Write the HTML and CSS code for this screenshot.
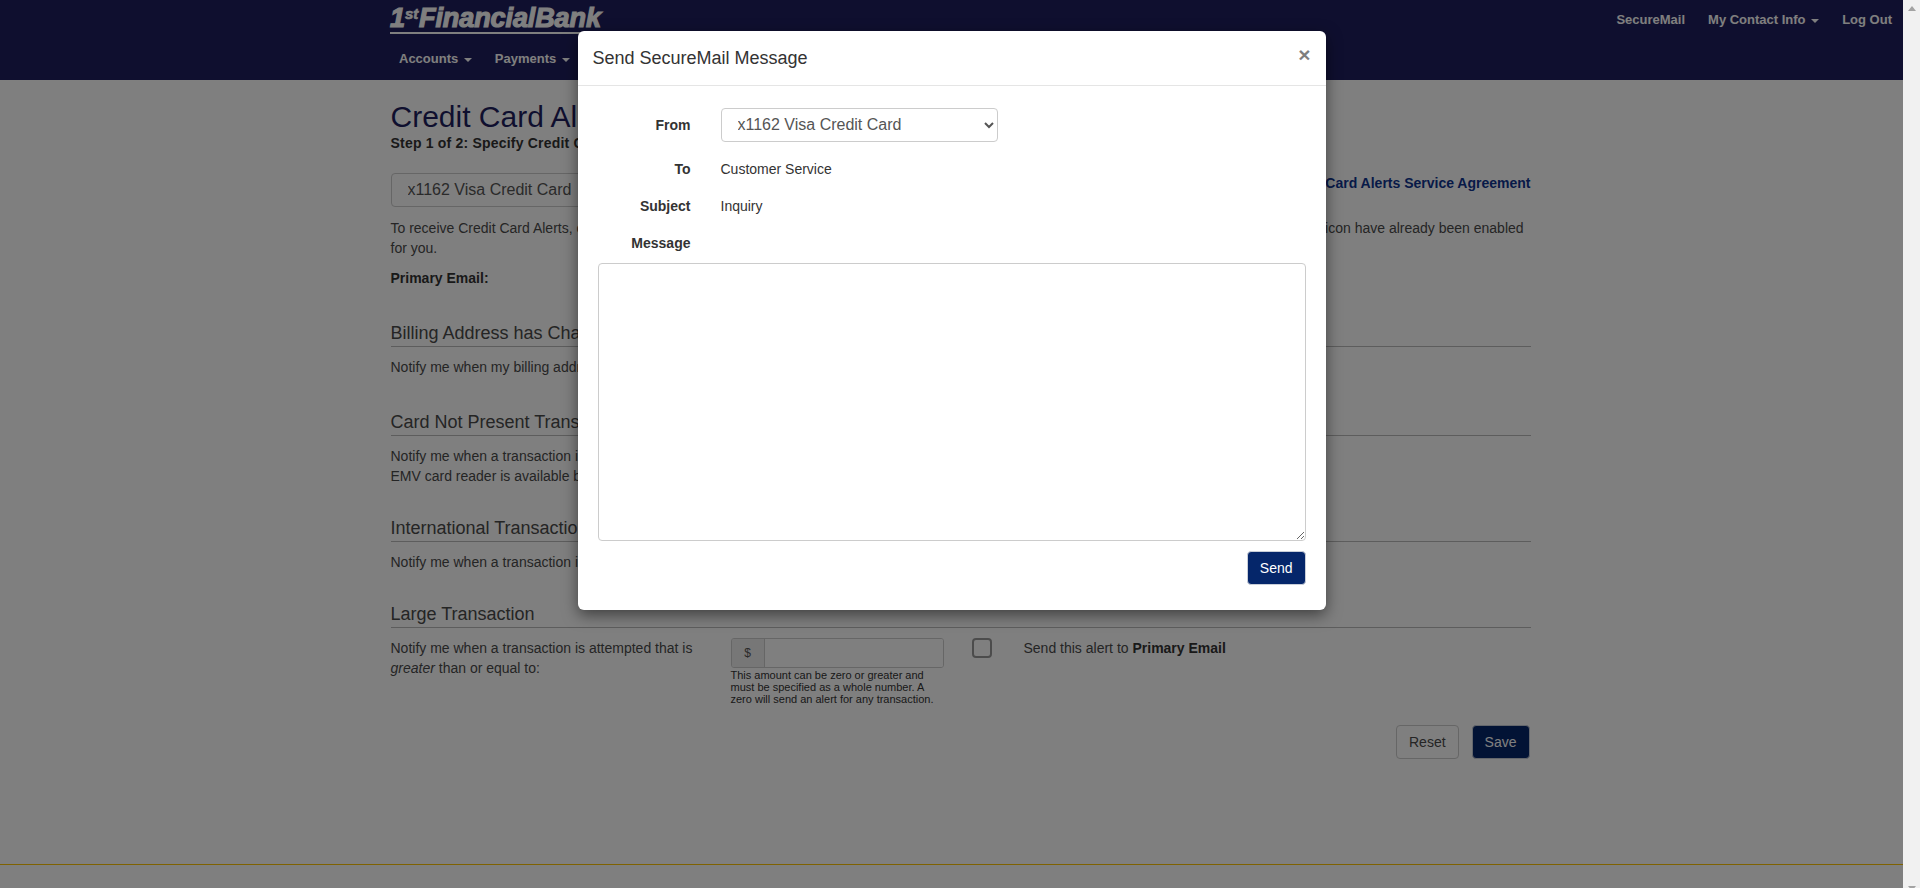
FILE: index.html
```html
<!DOCTYPE html>
<html lang="en">
<head>
<meta charset="utf-8">
<title>Credit Card Alerts</title>
<link rel="stylesheet" href="styles.css">
</head>
<body>
<div class="page">
  <header class="navbar">
    <div class="nav-top">
      <a class="logo">1<sup>st</sup>FinancialBank<small>USA</small></a>
      <ul class="nav-util">
        <li>SecureMail</li>
        <li>My Contact Info <span class="caret"></span></li>
        <li>Log Out</li>
      </ul>
    </div>
    <ul class="nav-main">
      <li>Accounts <span class="caret"></span></li>
      <li>Payments <span class="caret"></span></li>
    </ul>
  </header>

  <main class="content">
    <h1>Credit Card Alerts</h1>
    <p class="step">Step 1 of 2: Specify Credit Card Alert Settings</p>
    <div class="account-row">
      <select class="field account-select"><option>x1162 Visa Credit Card</option></select>
      <a class="agreement">Credit Card Alerts Service Agreement</a>
    </div>
    <p class="intro">To receive Credit Card Alerts, check the box next to each alert that you would like to receive and then click on the Save button. Alerts marked by a lock icon have already been enabled for you.</p>
    <p class="primary"><b>Primary Email:</b></p>

    <section class="section">
      <h3>Billing Address has Changed</h3>
      <div class="alert-row"><p>Notify me when my billing address has changed.</p></div>
    </section>
    <section class="section">
      <h3>Card Not Present Transaction</h3>
      <div class="alert-row"><p>Notify me when a transaction is attempted and an<br>EMV card reader is available but not used.</p></div>
    </section>
    <section class="section section-tight">
      <h3>International Transaction</h3>
      <div class="alert-row"><p>Notify me when a transaction is international.</p></div>
    </section>
    <section class="section section-tight">
      <h3>Large Transaction</h3>
      <div class="alert-row">
        <p>Notify me when a transaction is attempted that is <i>greater</i> than or equal to:</p>
        <div>
          <div class="input-group"><span class="addon">$</span><span class="amount"></span></div>
          <p class="help">This amount can be zero or greater and must be specified as a whole number. A zero will send an alert for any transaction.</p>
        </div>
        <span class="check"></span>
        <p class="alert-label">Send this alert to <b>Primary Email</b></p>
      </div>
    </section>
    <div class="actions">
      <button class="btn btn-default">Reset</button>
      <button class="btn btn-primary">Save</button>
    </div>
  </main>
  <footer class="footer"></footer>

  <div class="backdrop"></div>

  <div class="modal">
    <div class="modal-header">
      <h4>Send SecureMail Message</h4>
      <span class="close">×</span>
    </div>
    <form class="modal-body">
      <div class="form-row form-row-select">
        <label>From</label>
        <select class="field modal-select"><option>x1162 Visa Credit Card</option></select>
      </div>
      <div class="form-row"><label>To</label><span>Customer Service</span></div>
      <div class="form-row"><label>Subject</label><span>Inquiry</span></div>
      <div class="form-row form-row-last"><label>Message</label></div>
      <textarea class="message"></textarea>
      <div class="modal-actions"><button type="button" class="btn btn-primary">Send</button></div>
    </form>
  </div>
</div>
<aside class="scrollbar"><span class="arrow-up"></span><span class="arrow-down"></span></aside>
</body>
</html>
```

FILE: styles.css
```css
* { box-sizing: border-box; }
html, body { margin: 0; height: 888px; overflow: hidden; }
body {
  display: flex;
  font: 14px/20px "Liberation Sans", Arial, sans-serif;
  color: #333;
  background: #fff;
}
p { margin: 0; }
ul { list-style: none; margin: 0; padding: 0; }

.page {
  position: relative;
  flex: 1;
  min-width: 0;
  height: 888px;
  display: flex;
  flex-direction: column;
  overflow: hidden;
}

.scrollbar {
  width: 17px;
  height: 888px;
  background: #f1f1f1;
  display: flex;
  flex-direction: column;
  align-items: center;
  justify-content: space-between;
  padding-top: 6px;
  overflow: hidden;
}
.arrow-up {
  border-left: 4px solid transparent;
  border-right: 4px solid transparent;
  border-bottom: 5px solid #a3a3a3;
}
.arrow-down {
  margin-bottom: -3px;
  border-left: 4px solid transparent;
  border-right: 4px solid transparent;
  border-top: 5px solid #a3a3a3;
}

/* navbar */
.navbar {
  height: 80px;
  flex: none;
  background: #1f1f5e;
  color: #fff;
  font-size: 13px;
  font-weight: bold;
  padding-left: 17px;
}
.nav-top {
  display: flex;
  justify-content: space-between;
  height: 39px;
  padding-left: 373px;
}
.logo {
  position: relative;
  display: block;
  width: 215px;
  height: 34px;
  padding-top: 5px;
  border-bottom: 2px solid #fff;
  font: italic bold 27px/26px "Liberation Sans", Arial, sans-serif;
  letter-spacing: -.1px;
  color: #fff;
  -webkit-text-stroke: 1.2px #fff;
  white-space: nowrap;
}
.logo sup {
  font-size: 15px;
  line-height: 0;
  vertical-align: 8px;
  -webkit-text-stroke: .6px #fff;
  margin-right: 1px;
}
.logo small {
  position: absolute;
  right: 0;
  top: 34px;
  font: 5px/5px "Liberation Sans", Arial, sans-serif;
  -webkit-text-stroke: 0;
}
.nav-util {
  display: flex;
  gap: 23px;
  padding: 10px 11px 0 0;
}
.nav-main {
  display: flex;
  gap: 23px;
  padding: 10px 0 0 382px;
}
.caret {
  display: inline-block;
  width: 0;
  height: 0;
  margin-left: 2px;
  vertical-align: middle;
  border-top: 4px solid;
  border-left: 4px solid transparent;
  border-right: 4px solid transparent;
}

/* page content */
.content {
  flex: 1;
  width: 1140px;
  margin: 0 auto;
  position: relative;
  left: 9px;
  color: #4a4a4a;
}
h1 {
  margin: 20px 0 0;
  font-size: 30px;
  font-weight: normal;
  line-height: 33px;
  color: #1f1f5e;
}
.step { font-weight: bold; letter-spacing: .2px; color: #333; }
.account-row {
  display: flex;
  justify-content: space-between;
  margin-top: 20px;
}
.field {
  height: 34px;
  padding: 5px 12px 7px;
  border: 1px solid #ccc;
  border-radius: 4px;
  background: #fff;
  color: #555;
  font: 16px "Liberation Sans", Arial, sans-serif;
}
.account-select { width: 277px; }
.agreement { font-weight: bold; color: #0f3590; }
.intro { margin-top: 11px; }
.primary { margin-top: 10px; color: #333; }

.section { margin-top: 35px; }
.section-tight { margin-top: 32px; }
h3 {
  margin: 0 0 10px;
  height: 24px;
  font-size: 18px;
  font-weight: normal;
  line-height: 20px;
  border-bottom: 1px solid #bbb;
}
.alert-row {
  display: grid;
  grid-template-columns: 314px 213px 20px 1fr;
  column-gap: 26px;
}
.alert-label { margin-left: 8px; }
.alert-label b { color: #333; }
.input-group {
  display: flex;
  height: 30px;
  border: 1px solid #ccc;
  border-radius: 3px;
  overflow: hidden;
}
.addon {
  width: 33px;
  background: #eee;
  border-right: 1px solid #ccc;
  color: #555;
  font-size: 12px;
  line-height: 28px;
  text-align: center;
}
.amount { flex: 1; background: #fff; }
.help {
  margin-top: 1px;
  font-size: 11px;
  line-height: 12px;
  color: #333;
}
.check {
  width: 20px;
  height: 20px;
  margin-left: 2px;
  border: 2px solid #999;
  border-radius: 4px;
  background: #fff;
}
.actions {
  display: flex;
  justify-content: flex-end;
  gap: 13px;
  margin: 20px 1px 0 0;
}
.btn {
  height: 34px;
  padding: 6px 12px;
  border: 1px solid #ccc;
  border-radius: 4px;
  font: 14px/20px "Liberation Sans", Arial, sans-serif;
}
.btn-default { background: #fff; color: #4a4a4a; }
.btn-primary { background: #05266a; border-color: #c9ced8; color: #fff; }

.footer {
  flex: none;
  height: 24px;
  border-top: 1px solid #ffc400;
  background: #fff;
}

/* modal */
.backdrop {
  position: absolute;
  inset: 0;
  background: rgba(0, 0, 0, .5);
}
.modal {
  position: absolute;
  top: 31px;
  left: 0;
  right: 0;
  width: 748px;
  height: 579px;
  margin: 0 auto;
  background: #fff;
  border-radius: 6px;
  box-shadow: 0 5px 15px rgba(0, 0, 0, .5);
}
.modal-header {
  display: flex;
  justify-content: space-between;
  align-items: flex-start;
  height: 55px;
  padding: 17px 15px 0;
  border-bottom: 1px solid #e5e5e5;
}
h4 { margin: 0; font-size: 18px; font-weight: normal; line-height: 20px; }
.close {
  font-size: 21px;
  font-weight: bold;
  line-height: 14px;
  color: #000;
  opacity: .5;
}
.modal-body { padding: 22px 20px 0; }
.form-row {
  display: flex;
  column-gap: 30px;
  margin-bottom: 17px;
}
.form-row label {
  flex: none;
  width: 93px;
  text-align: right;
  font-weight: bold;
}
.form-row-select { align-items: center; }
.form-row-last { margin-bottom: 10px; }
.modal-select { width: 277px; }
.message {
  display: block;
  width: 708px;
  height: 278px;
  border: 1px solid #ccc;
  border-radius: 4px;
  outline: none;
}
.modal-actions {
  display: flex;
  justify-content: flex-end;
  margin-top: 10px;
}
```
